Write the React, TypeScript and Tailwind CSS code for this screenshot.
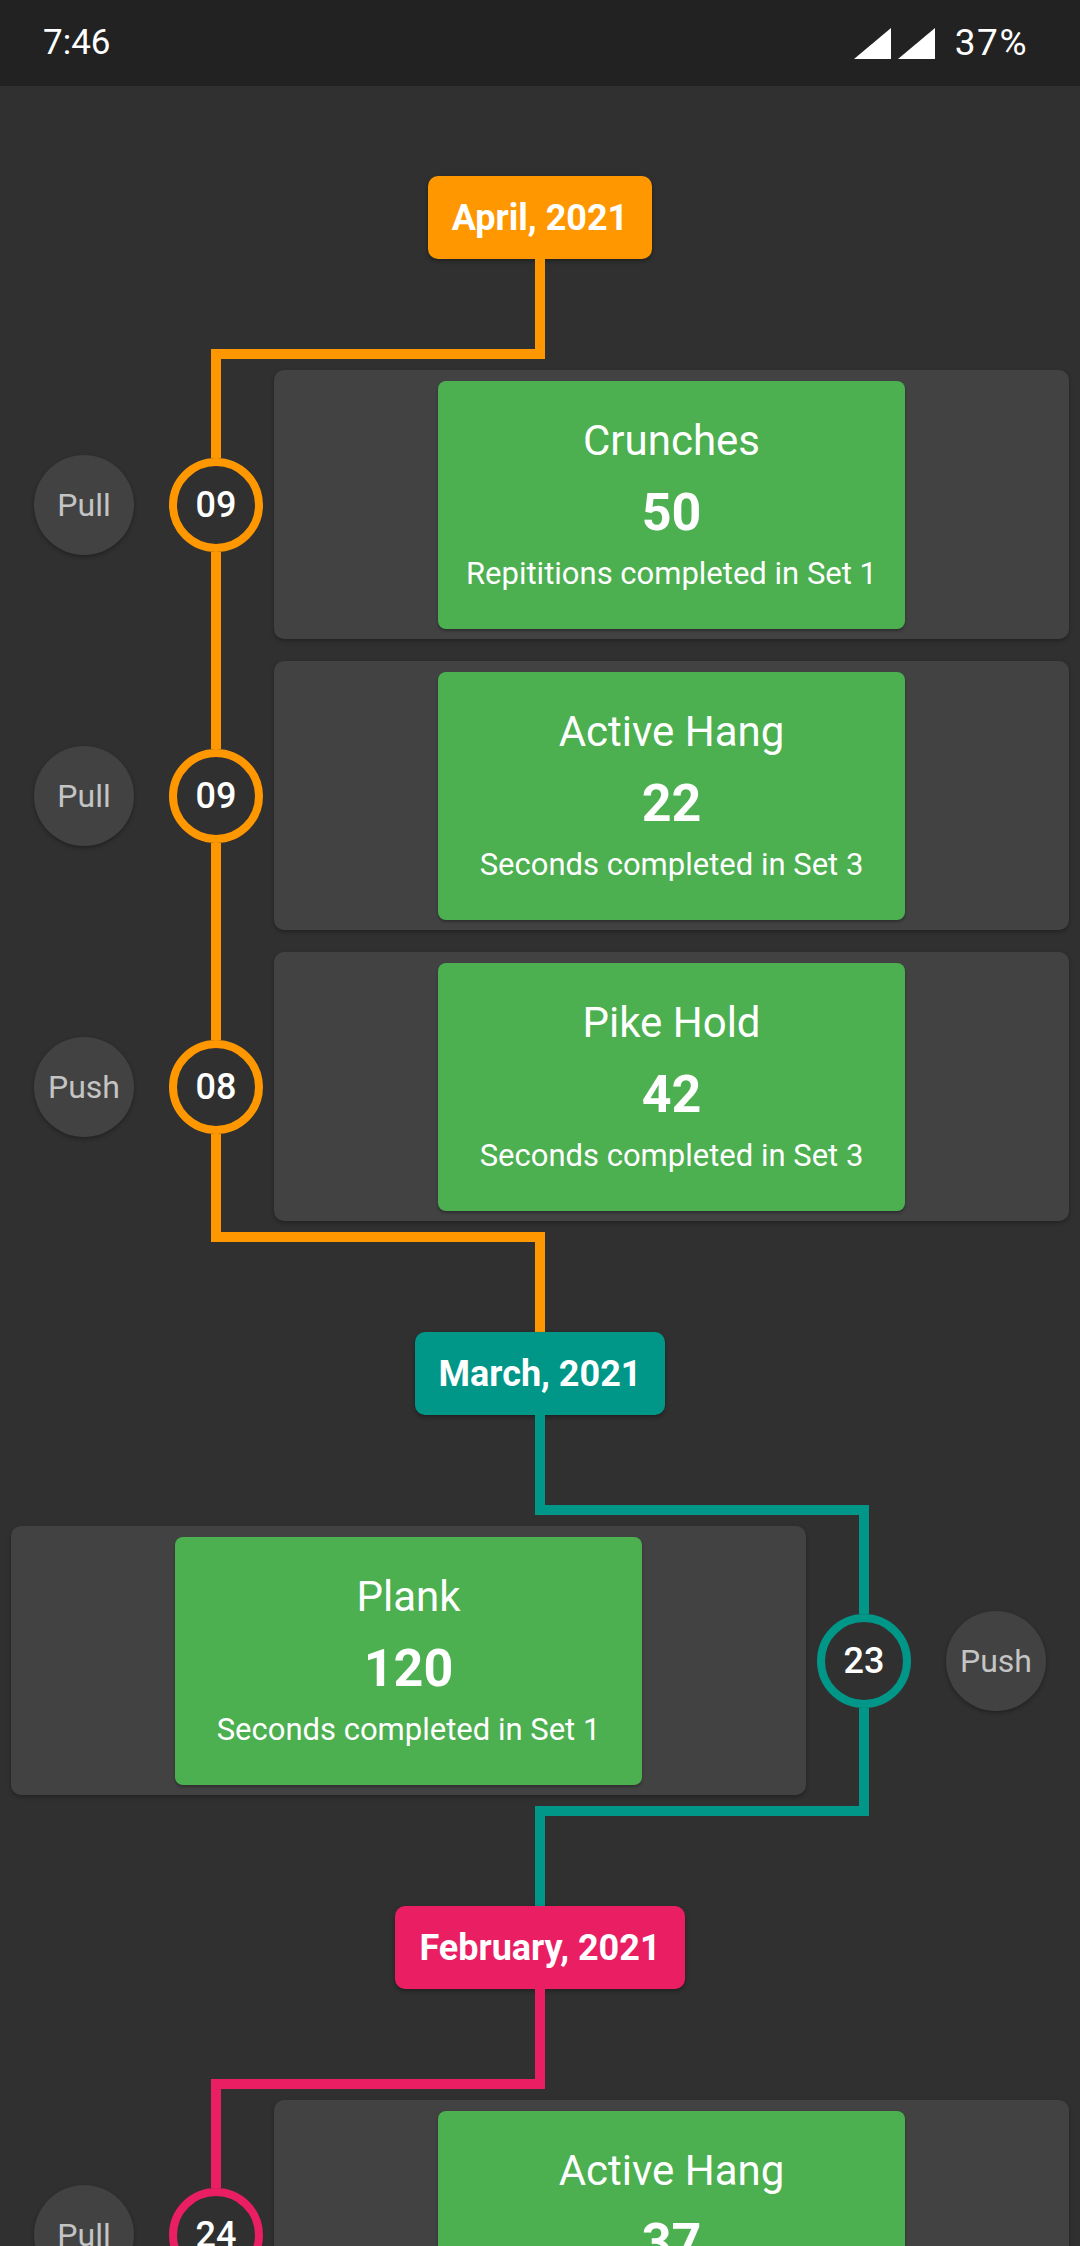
type Tone = "orange" | "teal" | "pink";

const tones: Record<Tone, { bg: string; border: string }> = {
  orange: { bg: "bg-[#ff9800]", border: "border-[#ff9800]" },
  teal: { bg: "bg-[#009688]", border: "border-[#009688]" },
  pink: { bg: "bg-[#e91e63]", border: "border-[#e91e63]" },
};

type Entry = { tag: string; day: string; name: string; value: string; note: string };
type Month = { label: string; tone: Tone; side: "left" | "right"; entries: Entry[] };

const months: Month[] = [
  {
    label: "April, 2021",
    tone: "orange",
    side: "left",
    entries: [
      { tag: "Pull", day: "09", name: "Crunches", value: "50", note: "Repititions completed in Set 1" },
      { tag: "Pull", day: "09", name: "Active Hang", value: "22", note: "Seconds completed in Set 3" },
      { tag: "Push", day: "08", name: "Pike Hold", value: "42", note: "Seconds completed in Set 3" },
    ],
  },
  {
    label: "March, 2021",
    tone: "teal",
    side: "right",
    entries: [{ tag: "Push", day: "23", name: "Plank", value: "120", note: "Seconds completed in Set 1" }],
  },
  {
    label: "February, 2021",
    tone: "pink",
    side: "left",
    entries: [{ tag: "Pull", day: "24", name: "Active Hang", value: "37", note: "Seconds completed in Set 1" }],
  },
];

const Signal = () => (
  <svg width="37" height="31" viewBox="0 0 37 31">
    <polygon points="37,0 37,31 0,31" fill="#ffffff" />
  </svg>
);

const StatusBar = () => (
  <div className="h-[86px] bg-[#222222] flex items-center justify-between pl-[43px] pr-[52px] text-white text-[35px]">
    <span>7:46</span>
    <div className="flex items-center gap-[7px]">
      <Signal />
      <Signal />
      <span className="ml-[13px] text-[37px] tracking-[1.5px]">37%</span>
    </div>
  </div>
);

const Badge = ({ label, tone }: { label: string; tone: Tone }) => (
  <div className="flex justify-center">
    <div
      className={`h-[83px] px-[24px] rounded-[10px] flex items-center text-white font-bold text-[36px] shadow-[0_2px_4px_rgba(0,0,0,0.35)] ${tones[tone].bg}`}
    >
      {label}
    </div>
  </div>
);

// vertical stub at the centre plus the horizontal run to the row's line
const Stem = ({ tone }: { tone: Tone }) => (
  <div className="h-[90px] flex justify-center">
    <div className={`w-[10px] ${tones[tone].bg}`} />
  </div>
);

const Run = ({ tone, side }: { tone: Tone; side: "left" | "right" }) => (
  <div className={`h-[10px] w-[334px] ${side === "left" ? "ml-[211px]" : "ml-[535px]"} ${tones[tone].bg}`} />
);

const Row = ({ entry, tone, side }: { entry: Entry; tone: Tone; side: "left" | "right" }) => (
  <div className={`flex h-[291px] ${side === "left" ? "flex-row" : "flex-row-reverse"}`}>
    <div className="w-[168px] flex items-center justify-center">
      <div className="w-[100px] h-[100px] rounded-full bg-[#424242] flex items-center justify-center text-[#c4c4c4] text-[32px] shadow-[0_2px_4px_rgba(0,0,0,0.3)]">
        {entry.tag}
      </div>
    </div>
    <div className="w-[96px] flex flex-col items-center">
      <div className={`flex-1 w-[10px] ${tones[tone].bg}`} />
      <div
        className={`w-[94px] h-[94px] shrink-0 rounded-full border-[8px] bg-[#303030] flex items-center justify-center text-white font-medium text-[36px] ${tones[tone].border}`}
      >
        {entry.day}
      </div>
      <div className={`flex-1 w-[10px] ${tones[tone].bg}`} />
    </div>
    <div
      className={`w-[795px] h-[269px] my-[11px] rounded-[10px] bg-[#424242] flex items-center justify-center shadow-[0_2px_4px_rgba(0,0,0,0.3)] ${
        side === "left" ? "ml-[10px]" : "mr-[10px]"
      }`}
    >
      <div className="w-[467px] h-[248px] rounded-[8px] bg-[#4caf50] flex flex-col items-center justify-center text-white shadow-[0_2px_3px_rgba(0,0,0,0.3)]">
        <div className="text-[42px] leading-[48px]">{entry.name}</div>
        <div className="mt-[18px] text-[52px] leading-[60px] font-bold">{entry.value}</div>
        <div className="mt-[13px] text-[31px] leading-[36px]">{entry.note}</div>
      </div>
    </div>
  </div>
);

export default function App() {
  return (
    <div className="w-[1080px] h-[2246px] overflow-hidden bg-[#303030] font-[Roboto,sans-serif]">
      <StatusBar />
      <div className="pt-[90px]">
        {months.map((m, i) => (
          <div key={m.label}>
            <Badge label={m.label} tone={m.tone} />
            <Stem tone={m.tone} />
            <Run tone={m.tone} side={m.side} />
            {m.entries.map((e, j) => (
              <Row key={j} entry={e} tone={m.tone} side={m.side} />
            ))}
            {i < months.length - 1 && (
              <>
                <Run tone={m.tone} side={m.side} />
                <Stem tone={m.tone} />
              </>
            )}
          </div>
        ))}
      </div>
    </div>
  );
}
